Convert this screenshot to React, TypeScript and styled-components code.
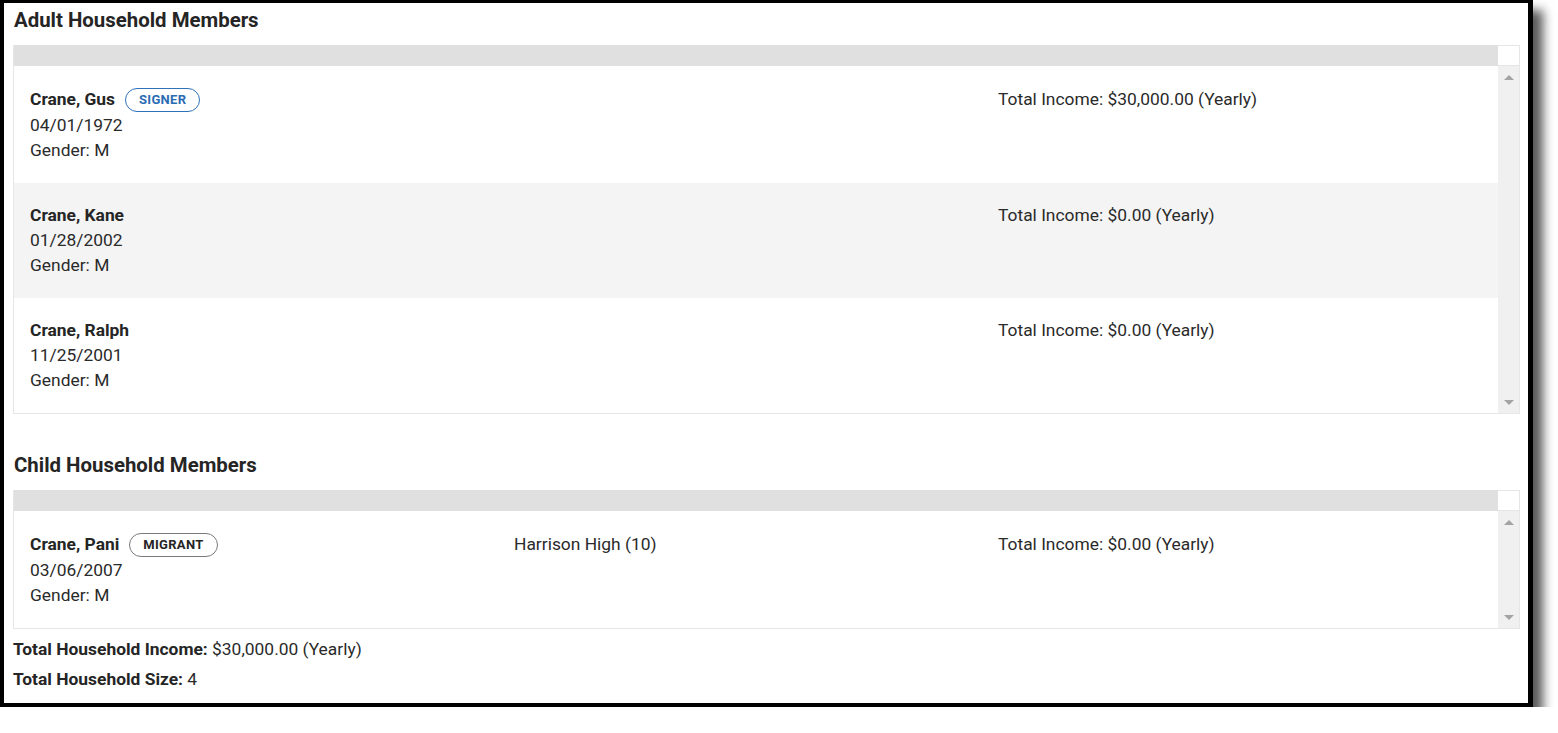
import React from "react";
import styled, { createGlobalStyle } from "styled-components";

const Global = createGlobalStyle`
  html, body { margin: 0; padding: 0; background: #ffffff; }
  body { font-family: Roboto, "Liberation Sans", Arial, sans-serif; color: #252525; }
  * { box-sizing: border-box; }
`;

const Frame = styled.div`
  width: 1533px;
  height: 707px;
  background: #ffffff;
  border-style: solid;
  border-color: #000000;
  border-width: 3px 5px 4px 4px;
  box-shadow: 10px 10px 10px rgba(0, 0, 0, 0.65);
  padding: 5px 8px 0 9px;
`;

const Heading = styled.h2<{ $top?: number }>`
  margin: ${(p) => p.$top ?? 0}px 0 13px 0;
  padding-left: 1px;
  font-size: 20.4px;
  line-height: 24px;
  font-weight: 700;
  color: #252525;
`;

const Table = styled.div`
  display: grid;
  grid-template-columns: 1fr 21px;
  border-left: 1px solid #e6e6e6;
  border-right: 1px solid #e6e6e6;
  border-bottom: 1px solid #e6e6e6;
`;

const HeaderBar = styled.div`
  height: 21px;
  background: #e0e0e0;
`;

const Corner = styled.div`
  height: 21px;
  background: #ffffff;
  border-top: 1px solid #e6e6e6;
  border-bottom: 1px solid #e6e6e6;
`;

const Rows = styled.div`
  display: flex;
  flex-direction: column;
`;

const Row = styled.div<{ $shade?: boolean }>`
  display: grid;
  grid-template-columns: repeat(3, 1fr);
  padding: 20px 16px 20px 16px;
  background: ${(p) => (p.$shade ? "#f4f4f4" : "#ffffff")};
  font-size: 17.4px;
  line-height: 25px;
`;

const Cell = styled.div`
  display: flex;
  flex-direction: column;
`;

const NameLine = styled.div<{ $badge?: boolean }>`
  display: flex;
  align-items: center;
  gap: 10px;
  height: ${(p) => (p.$badge ? 27 : 25)}px;
`;

const Name = styled.span`
  font-weight: 700;
  color: #252525;
`;

const Badge = styled.span<{ $tone: "blue" | "gray" }>`
  display: inline-flex;
  align-items: center;
  height: 24px;
  padding: 0 13px;
  border-radius: 12px;
  font-size: 13px;
  font-weight: 700;
  letter-spacing: 0.3px;
  line-height: 1;
  border: 1px solid ${(p) => (p.$tone === "blue" ? "#2f72b8" : "#7a7a7a")};
  color: ${(p) => (p.$tone === "blue" ? "#2a6cb2" : "#252525")};
  background: #ffffff;
`;

const Text = styled.div`
  color: #2a2a2a;
`;

const ScrollBar = styled.div`
  background: #f0f0f0;
  display: flex;
  flex-direction: column;
  justify-content: space-between;
  align-items: center;
  padding: 9px 0 8px 0;
`;

const Arrow = styled.div<{ $dir: "up" | "down" }>`
  width: 0;
  height: 0;
  border-left: 5px solid transparent;
  border-right: 5px solid transparent;
  ${(p) =>
    p.$dir === "up"
      ? "border-bottom: 5px solid #a3a3a3;"
      : "border-top: 5px solid #a3a3a3;"}
`;

const Footer = styled.div`
  margin-top: 5px;
  font-size: 17.4px;
  line-height: 30px;
  color: #2a2a2a;
`;

const Strong = styled.span`
  font-weight: 700;
  color: #252525;
`;

type Member = {
  name: string;
  dob: string;
  gender: string;
  income: string;
  school?: string;
  badge?: { label: string; tone: "blue" | "gray" };
};

const adults: Member[] = [
  { name: "Crane, Gus", dob: "04/01/1972", gender: "M", income: "$30,000.00", badge: { label: "SIGNER", tone: "blue" } },
  { name: "Crane, Kane", dob: "01/28/2002", gender: "M", income: "$0.00" },
  { name: "Crane, Ralph", dob: "11/25/2001", gender: "M", income: "$0.00" },
];

const children: Member[] = [
  { name: "Crane, Pani", dob: "03/06/2007", gender: "M", income: "$0.00", school: "Harrison High (10)", badge: { label: "MIGRANT", tone: "gray" } },
];

function MemberTable({ members }: { members: Member[] }) {
  return (
    <Table>
      <HeaderBar />
      <Corner />
      <Rows>
        {members.map((m, i) => (
          <Row key={m.name} $shade={i % 2 === 1}>
            <Cell>
              <NameLine $badge={!!m.badge}>
                <Name>{m.name}</Name>
                {m.badge && <Badge $tone={m.badge.tone}>{m.badge.label}</Badge>}
              </NameLine>
              <Text>{m.dob}</Text>
              <Text>Gender: {m.gender}</Text>
            </Cell>
            <Cell>
              <NameLine $badge={!!m.badge}>
                <Text>{m.school ?? ""}</Text>
              </NameLine>
            </Cell>
            <Cell>
              <NameLine $badge={!!m.badge}>
                <Text>Total Income: {m.income} (Yearly)</Text>
              </NameLine>
            </Cell>
          </Row>
        ))}
      </Rows>
      <ScrollBar>
        <Arrow $dir="up" />
        <Arrow $dir="down" />
      </ScrollBar>
    </Table>
  );
}

export default function App() {
  return (
    <>
      <Global />
      <Frame>
        <Heading>Adult Household Members</Heading>
        <MemberTable members={adults} />
        <Heading $top={39}>Child Household Members</Heading>
        <MemberTable members={children} />
        <Footer>
          <div>
            <Strong>Total Household Income:</Strong> $30,000.00 (Yearly)
          </div>
          <div>
            <Strong>Total Household Size:</Strong> 4
          </div>
        </Footer>
      </Frame>
    </>
  );
}
